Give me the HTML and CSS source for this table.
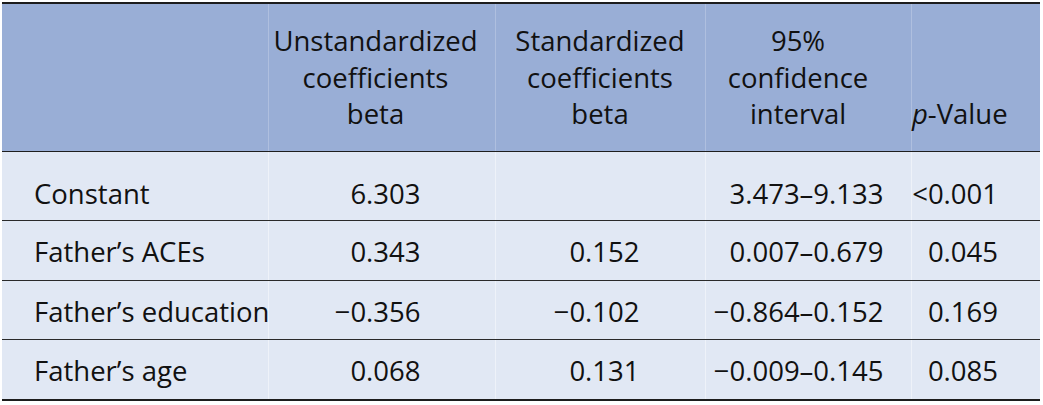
FILE: index.html
```html
<!DOCTYPE html>
<html lang="en">
<head>
<meta charset="utf-8">
<title>Regression table</title>
<link rel="stylesheet" href="styles.css">
</head>
<body>
<table class="reg">
  <colgroup>
    <col class="c1"><col class="c2"><col class="c3"><col class="c4"><col class="c5">
  </colgroup>
  <thead>
    <tr>
      <th class="h1"></th>
      <th class="h2">Unstandardized<br>coefficients<br>beta</th>
      <th class="h3">Standardized<br>coefficients<br>beta</th>
      <th class="h4">95%<br>confidence<br>interval</th>
      <th class="h5"><i>p</i>-Value</th>
    </tr>
  </thead>
  <tbody>
    <tr class="first">
      <td class="lbl">Constant</td>
      <td class="n2">6.303</td>
      <td class="n3"></td>
      <td class="n4">3.473–9.133</td>
      <td class="n5">&lt;0.001</td>
    </tr>
    <tr>
      <td class="lbl">Father’s ACEs</td>
      <td class="n2">0.343</td>
      <td class="n3">0.152</td>
      <td class="n4">0.007–0.679</td>
      <td class="n5">0.045</td>
    </tr>
    <tr>
      <td class="lbl">Father’s education</td>
      <td class="n2">−0.356</td>
      <td class="n3">−0.102</td>
      <td class="n4">−0.864–0.152</td>
      <td class="n5">0.169</td>
    </tr>
    <tr>
      <td class="lbl">Father’s age</td>
      <td class="n2">0.068</td>
      <td class="n3">0.131</td>
      <td class="n4">−0.009–0.145</td>
      <td class="n5">0.085</td>
    </tr>
  </tbody>
</table>
</body>
</html>
```

FILE: styles.css
```css
html, body {
  margin: 0;
  padding: 0;
  background: #ffffff;
}

body {
  padding: 2px 3px 0 2px;
  font-family: "Open Sans", "Noto Sans", sans-serif;
  font-size: 27.5px;
  line-height: 36.5px;
  color: #111111;
}

.reg {
  width: 1038px;
  table-layout: fixed;
  border-collapse: collapse;
  border-top: 2px solid #1c1c1c;
  border-bottom: 2px solid #1c1c1c;
}

.c1 { width: 266px; }
.c2 { width: 227px; }
.c3 { width: 210px; }
.c4 { width: 206px; }
.c5 { width: 129px; }

.reg thead th {
  background: #99aed6;
  font-weight: normal;
  text-align: center;
  vertical-align: bottom;
  padding: 19px 0 18px 0;
  border-bottom: 1.5px solid #1e1e1e;
  border-left: 1px solid rgba(255, 255, 255, 0.22);
}

.reg thead th.h1 { border-left: none; }
.reg thead th.h2 { padding-right: 12px; }
.reg thead th.h4 { padding-right: 20px; }
.reg thead th.h5 { padding-right: 32px; }

.reg tbody td {
  background: #e1e8f4;
  padding: 13px 0 9px 0;
  border-bottom: 1px solid #2a2a2a;
  border-left: 1px solid rgba(255, 255, 255, 0.45);
  white-space: nowrap;
  vertical-align: bottom;
}

.reg tbody tr.first td {
  padding-top: 24px;
  padding-bottom: 8px;
}

.reg tbody tr:last-child td {
  border-bottom: 2px solid #1c1c1c;
}

.reg tbody td.lbl {
  border-left: none;
  padding-left: 32px;
  text-align: left;
}

.n2 { text-align: right; padding-right: 74px !important; }
.n3 { text-align: right; padding-right: 65px !important; }
.n4 { text-align: right; padding-right: 27px !important; }
.n5 { text-align: right; padding-right: 42px !important; }
```
